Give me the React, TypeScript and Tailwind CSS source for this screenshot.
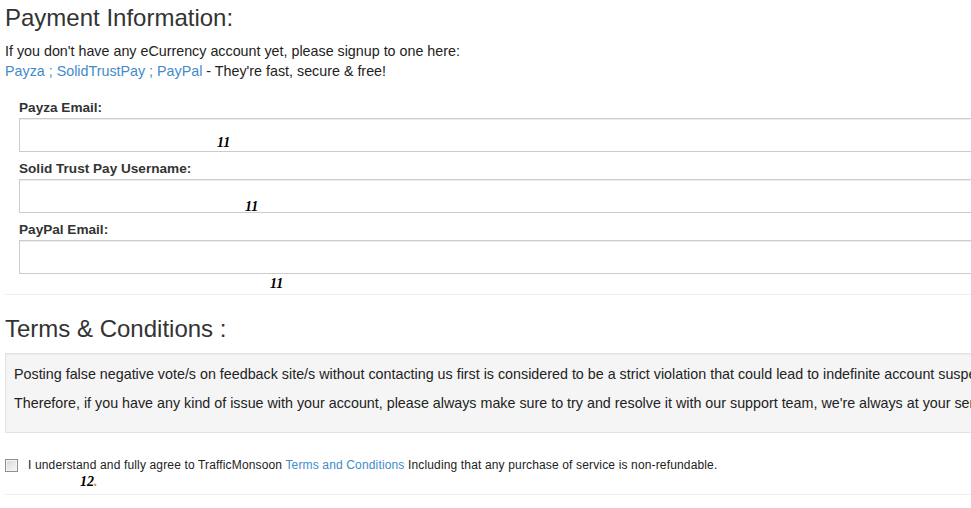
const fieldLabels = ["Payza Email:", "Solid Trust Pay Username:", "PayPal Email:"];

function Marker({ text, className }: { text: string; className: string }) {
  return (
    <span
      className={`absolute font-['Liberation_Serif',serif] text-[14px] font-bold italic leading-none text-black ${className}`}
    >
      {text}
    </span>
  );
}

function Field({ label }: { label: string }) {
  return (
    <div className="ml-[19px] mt-[7px] first:mt-[17px]">
      <label className="block text-[13.6px] font-bold leading-[20px] text-[#333]">
        {label}
      </label>
      <div className="h-[34px] w-[1200px] border border-[#ccc] bg-white shadow-[inset_0_1px_1px_rgba(0,0,0,0.075)]"></div>
    </div>
  );
}

export default function App() {
  return (
    <div className="relative h-[508px] w-[971px] overflow-hidden bg-white font-['Liberation_Sans',Arial,sans-serif] text-[#333]">
      <div className="w-[1300px] pl-[5px]">
        <h3 className="mt-[5px] text-[24px] leading-[26px] text-[#333]">
          Payment Information:
        </h3>
        <p className="mt-[10px] text-[14.3px] leading-[20px] text-[#222]">
          If you don't have any eCurrency account yet, please signup to one
          here:
          <br />
          <a className="text-[#428bca]">Payza</a>
          <span className="text-[#428bca]"> ; </span>
          <a className="text-[#428bca]">SolidTrustPay</a>
          <span className="text-[#428bca]"> ; </span>
          <a className="text-[#428bca]">PayPal</a> - They're fast, secure &amp;
          free!
        </p>

        <div className="-ml-[5px]">
          {fieldLabels.map((l) => (
            <Field key={l} label={l} />
          ))}
        </div>

        <hr className="mt-[20px] border-t border-[#eee]" />

        <h3 className="mt-[21px] text-[24px] leading-[26px] text-[#333]">
          Terms &amp; Conditions :
        </h3>

        <div className="mt-[11px] h-[80px] border border-[#e3e3e3] bg-[#f5f5f5] px-[8px] pt-[10px] text-[14.3px] leading-[20px] text-[#222] shadow-[inset_0_1px_1px_rgba(0,0,0,0.05)]">
          <p className="whitespace-nowrap">
            Posting false negative vote/s on feedback site/s without contacting
            us first is considered to be a strict violation that could lead to
            indefinite account suspension.
          </p>
          <p className="mt-[9px] whitespace-nowrap">
            Therefore, if you have any kind of issue with your account, please
            always make sure to try and resolve it with our support team, we're
            always at your service.
          </p>
        </div>

        <div className="mt-[24px] flex items-center">
          <span className="h-[13px] w-[13px] border border-[#8e8f8f] bg-gradient-to-br from-[#d8d8d8] to-[#f8f8f8] shadow-[inset_0_0_0_1px_#f4f4f4]"></span>
          <span className="ml-[10px] text-[12px] leading-[16px] tracking-[0.15px] text-[#222]">
            I understand and fully agree to TrafficMonsoon{" "}
            <a className="text-[#428bca]">Terms and Conditions</a> Including
            that any purchase of service is non-refundable.
          </span>
        </div>

        <hr className="mt-[21px] border-t border-[#eee]" />
      </div>

      <Marker text="11" className="left-[217px] top-[136px]" />
      <Marker text="11" className="left-[245px] top-[200px]" />
      <Marker text="11" className="left-[270px] top-[277px]" />
      <span className="absolute left-[80px] top-[475px] font-['Liberation_Serif',serif] text-[14px] font-bold italic leading-none text-black">
        12<span className="text-[#f28a1e]">.</span>
      </span>
    </div>
  );
}
